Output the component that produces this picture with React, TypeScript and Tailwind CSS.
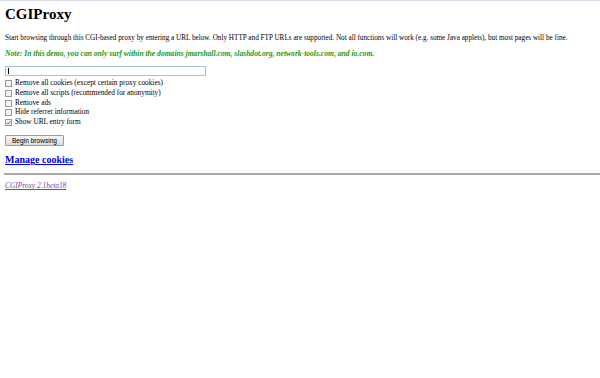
import { Check } from 'lucide-react';

const options = [
    { label: 'Remove all cookies (except certain proxy cookies)', checked: false },
    { label: 'Remove all scripts (recommended for anonymity)', checked: false },
    { label: 'Remove ads', checked: false },
    { label: 'Hide referrer information', checked: false },
    { label: 'Show URL entry form', checked: true },
];

export default function App() {
    return (
        <div className="w-[600px] h-[378px] bg-white border-t border-[#dcdcec] font-['Liberation_Serif',serif] text-black overflow-hidden">
            <div className="pl-[5px] pt-[4px]">
                {/* Title */}
                <h1 className="text-[15px] font-bold leading-[18px]">CGIProxy</h1>

                <p className="mt-[10px] text-[7.2px] leading-[10px]">
                    Start browsing through this CGI-based proxy by entering a URL below. Only HTTP and FTP URLs are supported. Not all functions will work (e.g. some Java applets), but most pages will be fine.
                </p>

                <p className="mt-[6px] text-[7.6px] leading-[10px] font-bold italic text-[#169a16]">
                    Note: In this demo, you can only surf within the domains jmarshall.com, slashdot.org, network-tools.com, and io.com.
                </p>

                {/* Form */}
                <div className="mt-[7px] w-[201px] h-[10px] border border-[#a8c0d8] bg-white flex items-center pl-[2px]">
                    <span className="w-px h-[6px] bg-black" />
                </div>

                <div className="mt-[3px] flex flex-col">
                    {options.map((o) => (
                        <div key={o.label} className="flex items-center gap-[3px] h-[9.7px] text-[7.3px]">
                            <span className="w-[7px] h-[7px] border border-[#9a9a9a] bg-[#f2f2f2] flex items-center justify-center">
                                {o.checked && <Check size={6} strokeWidth={4} className="text-[#2c3e6a]" />}
                            </span>
                            <span>{o.label}</span>
                        </div>
                    ))}
                </div>

                <button className="mt-[8px] w-[59px] h-[11px] border border-[#9c9c9c] rounded-[1px] bg-gradient-to-b from-[#f6f6f6] to-[#dcdcdc] text-[6.6px] leading-none font-['Liberation_Sans',sans-serif] text-black flex items-center justify-center">
                    Begin browsing
                </button>

                <a href="#" className="block mt-[8px] text-[10px] leading-[12px] font-bold text-[#0000ee] underline w-fit">
                    Manage cookies
                </a>
            </div>

            <hr className="mt-[7px] ml-[4px] border-0 h-[2px] bg-[#a8a8a8]" />

            <a href="#" className="block mt-[6px] ml-[5px] text-[7.4px] leading-[10px] italic text-[#6a48a8] underline w-fit">
                CGIProxy 2.1beta18
            </a>
        </div>
    );
}
